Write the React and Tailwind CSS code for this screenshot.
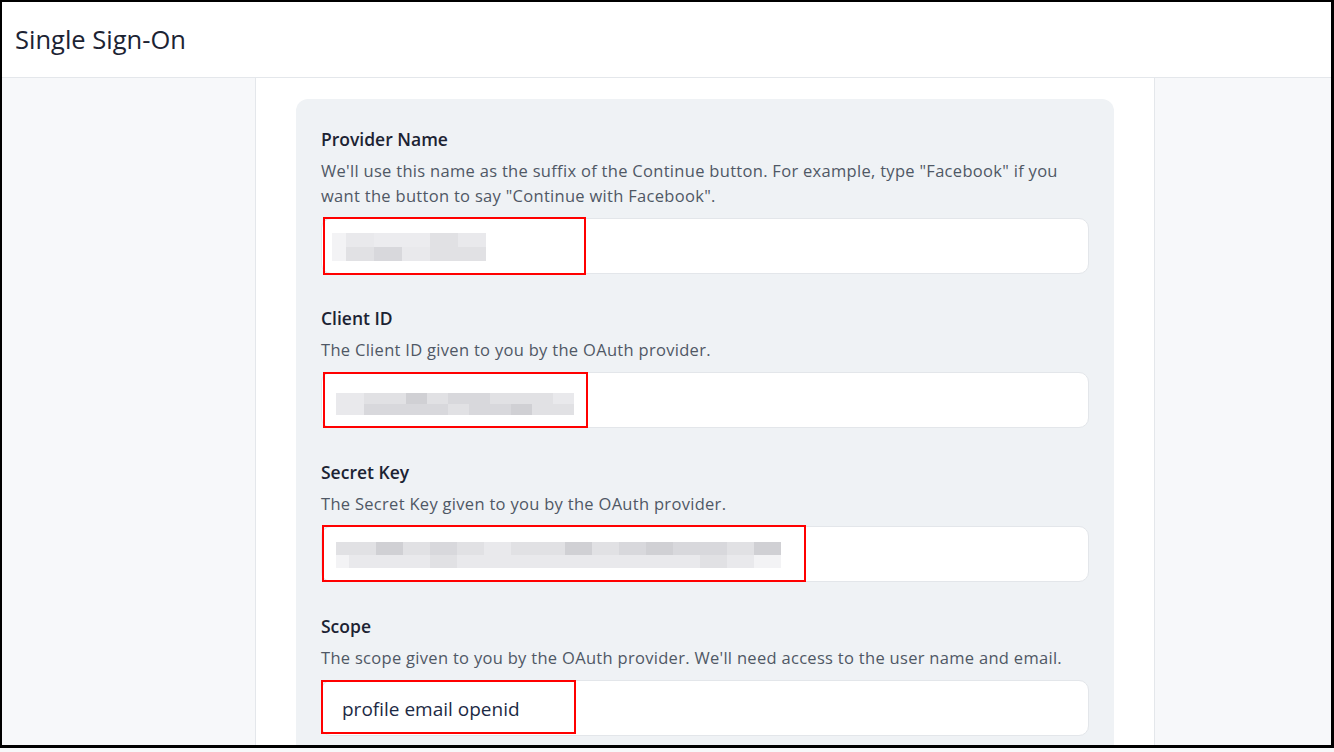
import React from "react";

const shades = [
  "bg-[#f3f3f5]",
  "bg-[#e9e9ec]",
  "bg-[#e1e1e4]",
  "bg-[#d8d8dc]",
  "bg-[#d0d0d4]",
  "bg-[#ececef]",
];

// pixelated (redacted) value inside an input
const Blur = ({ rows, cellW, cellH, firstW }) => (
  <div className="flex flex-col">
    {rows.map((row, r) => (
      <div key={r} className="flex">
        {row.map((shade, c) => (
          <div
            key={c}
            className={`${c === 0 ? firstW : cellW} ${cellH} ${shades[shade]}`}
          />
        ))}
      </div>
    ))}
  </div>
);

const Field = ({ label, desc, children, mark }) => (
  <div className="mb-[32px] last:mb-0">
    <p className="text-[17.5px] leading-[24px] font-semibold text-[#1c2333]">{label}</p>
    <p className="mt-[7px] text-[16.5px] leading-[25px] tracking-[0.3px] text-[#4f5865]">{desc}</p>
    <div className="relative mt-[10px] h-[56px] rounded-[10px] border border-[#e3e6ea] bg-white flex items-center">
      {children}
      <div className={`absolute border-2 border-[#ff0000] ${mark}`} />
    </div>
  </div>
);

export default function App() {
  return (
    <div className="w-[1334px] h-[752px] bg-[#f7f8fa] overflow-hidden" style={{ fontFamily: '"Open Sans", "Noto Sans", sans-serif' }}>
      <div className="h-[748px] flex flex-col overflow-hidden border-t-2 border-l-2 border-r-[3px] border-b-[3px] border-black">
        <header className="h-[76px] shrink-0 bg-white border-b border-[#e4e7eb] flex items-center pl-[13px]">
          <h1 className="text-[25.5px] font-medium text-[#1c2333]">Single Sign-On</h1>
        </header>
        <div className="flex flex-1 min-h-0 overflow-hidden">
          <aside className="w-[254px] shrink-0 bg-[#f7f8fa] border-r border-[#e4e7eb]" />
          <main className="w-[898px] shrink-0 bg-white pt-[21px] pl-[40px]">
            <div className="w-[818px] rounded-[12px] bg-[#eff2f5] pt-[28px] px-[25px] pb-[30px]">
              <Field
                label="Provider Name"
                desc={'We\'ll use this name as the suffix of the Continue button. For example, type "Facebook" if you want the button to say "Continue with Facebook".'}
                mark="left-[1px] -top-[2px] w-[263px] h-[58px]"
              >
                <div className="ml-[10px] mt-[1px]">
                  <Blur
                    cellW="w-[28px]"
                    firstW="w-[14px]"
                    cellH="h-[14px]"
                    rows={[
                      [0, 1, 5, 5, 2, 1],
                      [0, 2, 3, 1, 2, 2],
                    ]}
                  />
                </div>
              </Field>
              <Field
                label="Client ID"
                desc="The Client ID given to you by the OAuth provider."
                mark="left-[1px] -top-[1px] w-[265px] h-[56px]"
              >
                <div className="ml-[14px] mt-[8px]">
                  <Blur
                    cellW="w-[21px]"
                    firstW="w-[28px]"
                    cellH="h-[11px]"
                    rows={[
                      [1, 2, 2, 4, 2, 3, 3, 2, 2, 2, 1],
                      [1, 3, 3, 3, 3, 2, 3, 3, 4, 2, 2],
                    ]}
                  />
                </div>
              </Field>
              <Field
                label="Secret Key"
                desc="The Secret Key given to you by the OAuth provider."
                mark="left-[0px] -top-[2px] w-[484px] h-[57px]"
              >
                <div className="ml-[14px] mt-[2px]">
                  <Blur
                    cellW="w-[27px]"
                    firstW="w-[13px]"
                    cellH="h-[13px]"
                    rows={[
                      [2, 2, 4, 2, 3, 2, 1, 2, 2, 4, 2, 3, 4, 3, 3, 2, 4],
                      [0, 1, 1, 1, 2, 1, 1, 1, 1, 1, 1, 1, 1, 1, 2, 1, 0],
                    ]}
                  />
                </div>
              </Field>
              <Field
                label="Scope"
                desc="The scope given to you by the OAuth provider. We'll need access to the user name and email."
                mark="-left-[1px] -top-[1px] w-[255px] h-[54px]"
              >
                <span className="ml-[20px] mt-[2px] text-[19px] text-[#1c2a44]">profile email openid</span>
              </Field>
            </div>
          </main>
          <aside className="flex-1 bg-[#f7f8fa] border-l border-[#e4e7eb]" />
        </div>
      </div>
    </div>
  );
}
